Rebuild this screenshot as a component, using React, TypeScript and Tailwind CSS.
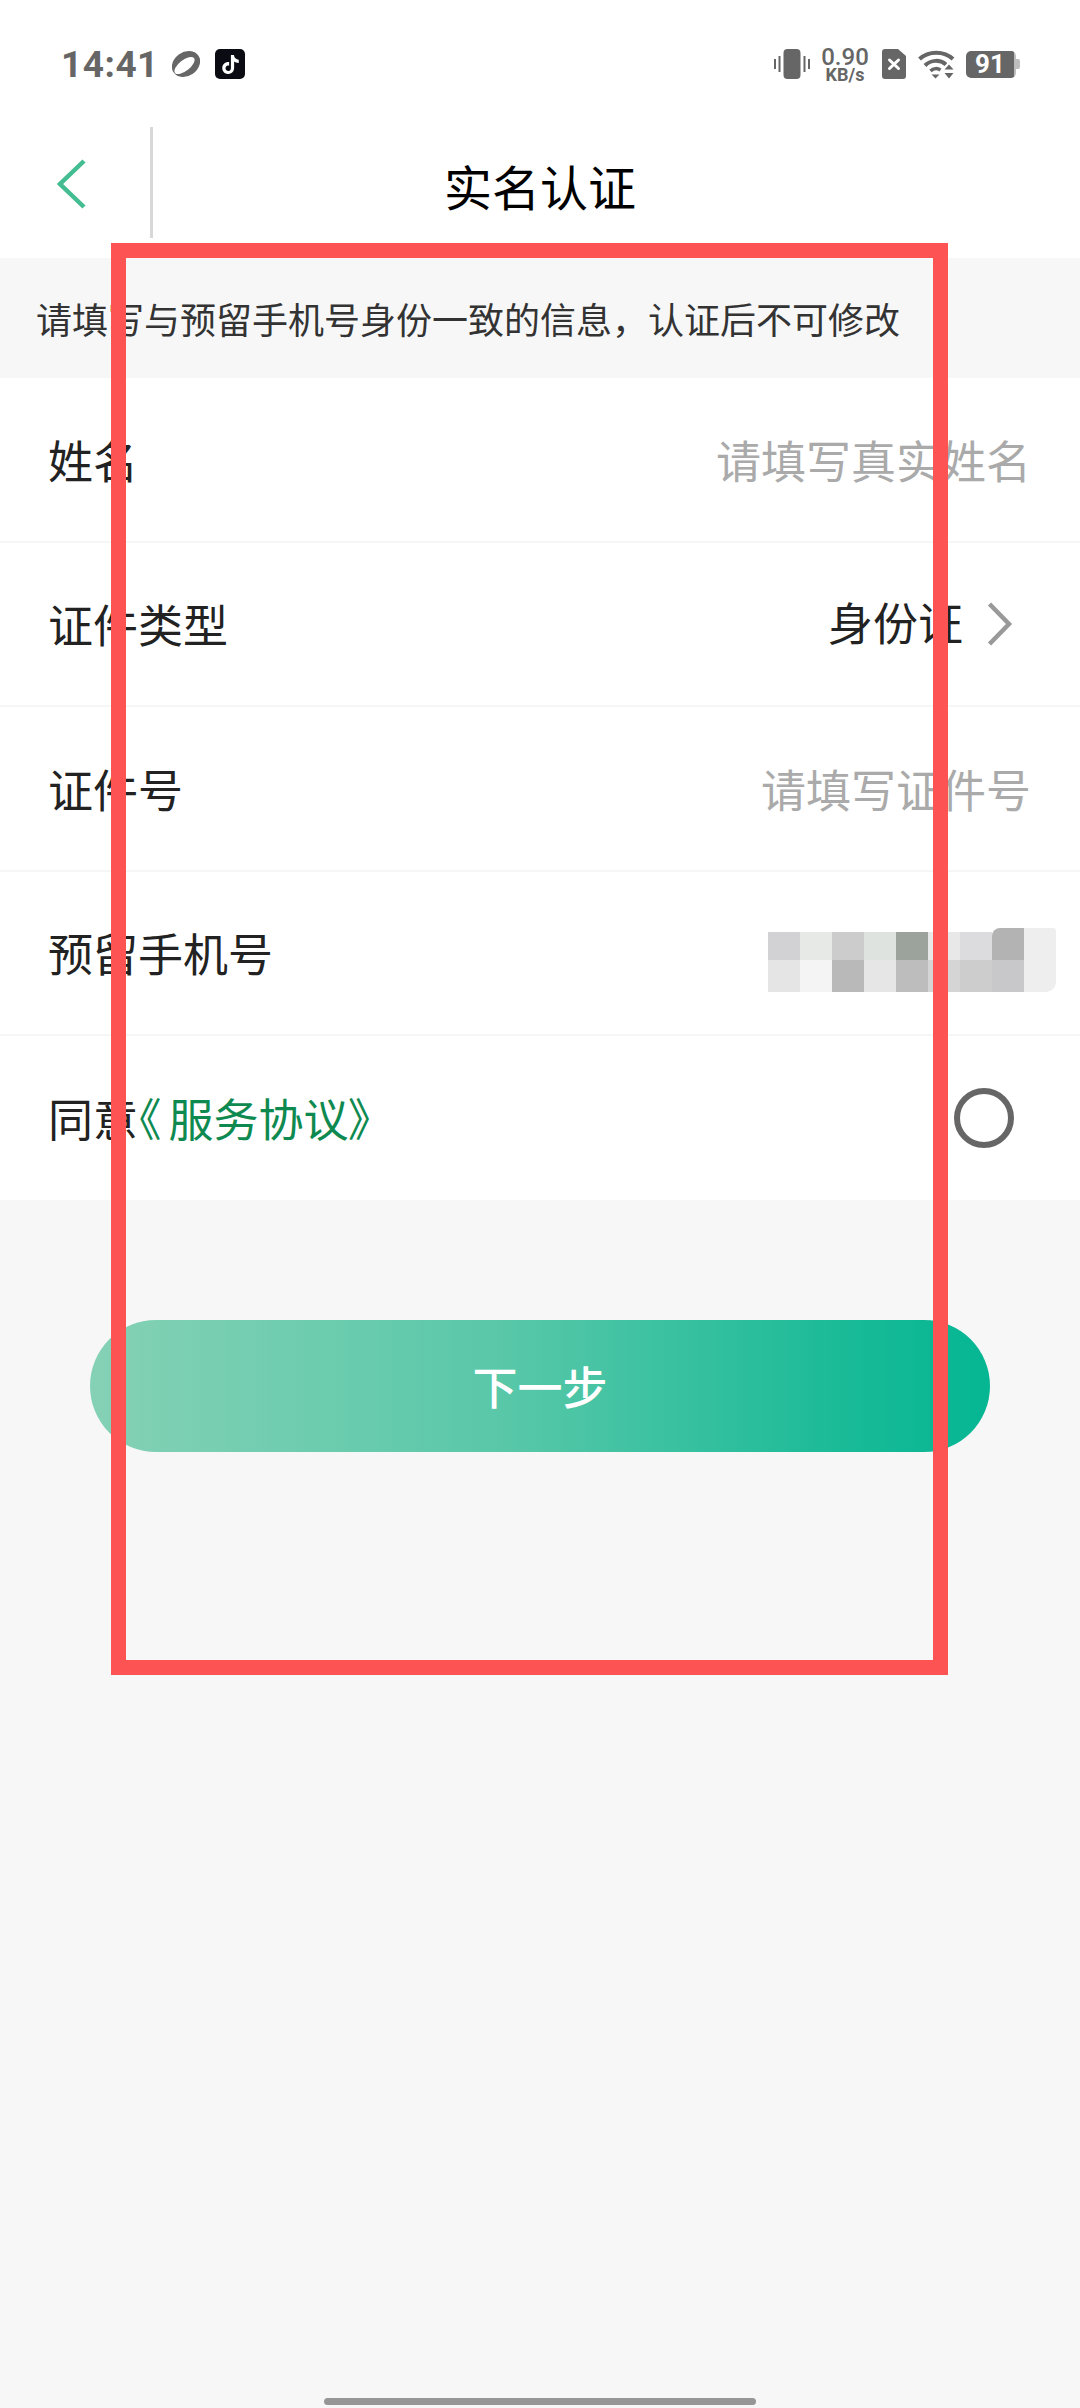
import { SiTiktok } from "react-icons/si";

const topCells = ["h-[28px] bg-[#d2d1d4]", "h-[28px] bg-[#e6e9e6]", "h-[28px] bg-[#cccccc]", "h-[28px] bg-[#dfe3df]", "h-[28px] bg-[#9ca29c]", "h-[28px] bg-[#e8e8e8]", "h-[28px] bg-[#dcdbde]", "h-[32px] rounded-tl-[8px] bg-[#b3b3b3]", "h-[32px] rounded-tr-[3px] bg-[#eeeeee]"];
const bottomCells = ["bg-[#e5e5e5]", "bg-[#f5f4f5]", "bg-[#b9b9b9]", "bg-[#e6e6e6]", "bg-[#bdbdbd]", "bg-[#d5d5d5]", "bg-[#cdcdcd]", "bg-[#c8c7ca]", "rounded-br-[10px] bg-[#eeeeee]"];

function Row({ children }: { children: React.ReactNode }) {
  return (
    <div className="h-[164.5px] flex items-center justify-between border-b-2 border-[#f6f6f6] pl-[48px] pr-[49px] text-[45px] text-[#222222]">
      {children}
    </div>
  );
}

function Planet() {
  return (
    <svg width="28" height="30" viewBox="0 0 28 30" fill="none">
      <ellipse cx="14" cy="15" rx="15" ry="12" transform="rotate(-35 14 15)" fill="#666666" />
      <ellipse cx="12.5" cy="16.5" rx="12" ry="5.5" transform="rotate(-38 12.5 16.5)" fill="#ffffff" />
    </svg>
  );
}

function Vibrate() {
  return (
    <svg width="36" height="30" viewBox="0 0 36 30">
      <rect x="9.5" y="0" width="17" height="30" rx="4" fill="#666666" />
      <rect x="0" y="10" width="2" height="10" fill="#666666" />
      <rect x="4.5" y="7" width="2" height="16" fill="#666666" />
      <rect x="29.5" y="7" width="2" height="16" fill="#666666" />
      <rect x="34" y="10" width="2" height="10" fill="#666666" />
    </svg>
  );
}

function Sim() {
  return (
    <svg width="24" height="30" viewBox="0 0 24 30">
      <path d="M3 0 H16 L24 7 V27 a3 3 0 0 1 -3 3 H3 a3 3 0 0 1 -3 -3 V3 a3 3 0 0 1 3 -3 Z" fill="#666666" />
      <path d="M7.5 11 L16.5 19.5 M16.5 11 L7.5 19.5" stroke="#ffffff" strokeWidth="3" strokeLinecap="round" />
    </svg>
  );
}

function Wifi() {
  return (
    <svg width="37" height="30" viewBox="0 0 37 30" fill="none">
      <path d="M1.5 10 C10.5 1.5 26 1.5 35 10" stroke="#666666" strokeWidth="4" />
      <path d="M7 16.5 C13 10.5 22 10.5 28 15.5" stroke="#666666" strokeWidth="4" />
      <path d="M12.5 22 C15.5 19 19.5 19 22.5 21" stroke="#666666" strokeWidth="3.5" />
      <path d="M13.5 25.5 H21.5 L17.5 29.5 Z" fill="#666666" />
      <path d="M31 15.5 L35.5 20.5 H26.5 Z M26.5 24 H35.5 L31 29.5 Z" fill="#666666" />
    </svg>
  );
}

function Battery() {
  return (
    <div className="flex items-center">
      <div className="relative w-[50px] h-[27px] rounded-[5px] bg-[#bdbdbd] overflow-hidden">
        <div className="h-full w-[48px] rounded-l-[5px] rounded-r-[1px] bg-[#666666] flex items-center justify-center text-white text-[26px] font-bold leading-none font-['Roboto',sans-serif]">
          91
        </div>
      </div>
      <div className="w-[4px] h-[10px] rounded-r-[2px] bg-[#bdbdbd]" />
    </div>
  );
}

export default function App() {
  return (
    <div className="relative w-[1080px] h-[2408px] overflow-hidden flex flex-col bg-[#f7f7f7] font-['Noto_Sans_CJK_SC','Noto_Sans',sans-serif]">
      <div className="h-[127px] shrink-0 bg-white flex items-start justify-between pt-[49px] pl-[61px] pr-[60px]">
        <div className="flex items-center h-[30px]">
          <span className="w-[98px] text-[37px] font-bold leading-none tracking-[0.5px] text-[#666666] font-['Roboto',sans-serif]">14:41</span>
          <span className="ml-[13px] flex"><Planet /></span>
          <span className="ml-[15px] w-[30px] h-[30px] rounded-[5px] bg-[#0b0b14] flex items-center justify-center">
            <SiTiktok className="text-[19px] text-white" />
          </span>
        </div>
        <div className="flex items-center h-[30px]">
          <Vibrate />
          <div className="ml-[12px] w-[46px] flex flex-col items-center font-['Roboto',sans-serif] font-medium text-[#666666]">
            <span className="text-[24px] leading-[20px] whitespace-nowrap">0.90</span>
            <span className="text-[18px] leading-[15px] font-bold whitespace-nowrap">KB/s</span>
          </div>
          <span className="ml-[14px] flex"><Sim /></span>
          <span className="ml-[12px] flex"><Wifi /></span>
          <span className="ml-[11px] flex"><Battery /></span>
        </div>
      </div>

      <div className="relative h-[131px] shrink-0 bg-white flex items-start justify-center pt-[34px]">
        <svg className="absolute left-[56px] top-[32px]" width="32" height="50" viewBox="0 0 32 50" fill="none">
          <path d="M28 2 L4 25 L28 48" stroke="#45bd92" strokeWidth="4.5" />
        </svg>
        <div className="absolute left-[150px] top-0 w-[3px] h-[111px] bg-[#d8d8d8]" />
        <span className="text-[48px] leading-none text-black">实名认证</span>
      </div>

      <div className="h-[120px] shrink-0 flex items-center pl-[36px] text-[36px] text-[#333333]">
        请填写与预留手机号身份一致的信息，认证后不可修改
      </div>

      <div className="bg-white shrink-0">
        <Row>
          <span>姓名</span>
          <span className="text-[#aaaaaa]">请填写真实姓名</span>
        </Row>
        <Row>
          <span>证件类型</span>
          <span className="flex items-center gap-[24px] pr-[18px]">
            <span className="-mt-[4px]">身份证</span>
            <svg width="26" height="44" viewBox="0 0 26 44" fill="none">
              <path d="M2.5 2 L22 22 L2.5 42" stroke="#999999" strokeWidth="4.5" />
            </svg>
          </span>
        </Row>
        <Row>
          <span>证件号</span>
          <span className="text-[#aaaaaa]">请填写证件号</span>
        </Row>
        <Row>
          <span>预留手机号</span>
          <div className="-mr-[25px] mt-[14px] flex flex-col">
            <div className="flex items-end h-[32px]">
              {topCells.map((c, i) => <div key={i} className={`w-[32px] ${c}`} />)}
            </div>
            <div className="flex h-[32px]">
              {bottomCells.map((c, i) => <div key={i} className={`w-[32px] ${c}`} />)}
            </div>
          </div>
        </Row>
        <div className="h-[164px] flex items-center justify-between pl-[48px] pr-[66px] text-[45px] text-[#222222]">
          <span className="flex items-center">
            <span>同意</span>
            <span className="text-[#0e8a50] flex items-center">
              <span className="mr-[8px] [font-feature-settings:'palt']">《</span>
              <span>服务协议</span>
              <span className="[font-feature-settings:'palt']">》</span>
            </span>
          </span>
          <div className="w-[60px] h-[60px] rounded-full border-[6px] border-[#666666]" />
        </div>
      </div>

      <div className="mt-[120px] mx-[90px] h-[132px] shrink-0 rounded-full bg-[linear-gradient(90deg,#85d1b5_0%,#5ac8a9_45%,#18ba97_85%,#05b693_100%)] flex items-center justify-center text-white text-[45px] font-medium">
        下一步
      </div>

      <div className="absolute left-[324px] bottom-[3px] w-[432px] h-[7px] rounded-full bg-[#969696]" />

      <div className="absolute left-[111px] top-[243px] w-[837px] h-[1432px] border-[15px] border-[#fe5353]" />
    </div>
  );
}
